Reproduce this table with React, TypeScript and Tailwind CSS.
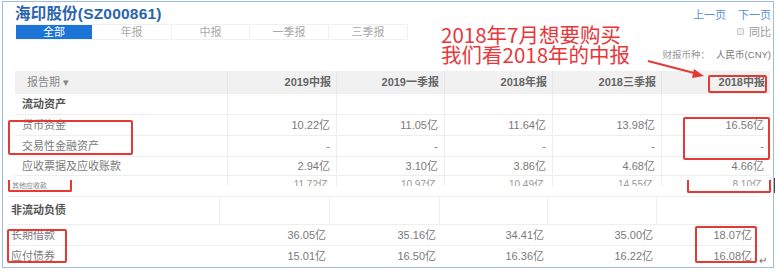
import React from "react";

const FONT = { fontFamily: '"Liberation Sans", "Noto Sans CJK SC", Arial, sans-serif' };

const topRows: { label: string; vals: string[]; section?: boolean }[] = [
  { label: "流动资产", vals: ["", "", "", "", ""], section: true },
  { label: "货币资金", vals: ["10.22亿", "11.05亿", "11.64亿", "13.98亿", "16.56亿"] },
  { label: "交易性金融资产", vals: ["-", "-", "-", "-", "-"] },
  { label: "应收票据及应收账款", vals: ["2.94亿", "3.10亿", "3.86亿", "4.68亿", "4.66亿"] },
];

const headers = ["2019中报", "2019一季报", "2018年报", "2018三季报", "2018中报"];

const topGrid = "grid grid-cols-[213px_109px_108px_108px_109px_108px]";
const botGrid = "grid grid-cols-[212px_110px_110px_108px_109px_101px]";

export default function App() {
  return (
    <div className="relative w-[779px] h-[278px] overflow-hidden bg-white pt-[1px] pl-[2px]" style={FONT}>
      <div className="w-[772px] h-[267px] border border-[#9dbbe3] flex flex-col">
        {/* top screenshot */}
        <div className="h-[185px] overflow-hidden flex flex-col">
          <div className="h-[22px] flex items-end justify-between pl-[12px] pr-[2px]">
            <div className="text-[15.5px] font-bold text-[#2a64b0] leading-[18px] tracking-[0.2px]">海印股份(SZ000861)</div>
            <div className="flex gap-[12px] text-[11px] text-[#5a8fd6] leading-[14px] self-start mt-[6px]">
              <span>上一页</span>
              <span>下一页</span>
            </div>
          </div>
          <div className="h-[16px] flex items-center justify-between pl-[13px] pr-[2px] mt-[1px]">
            <div className="flex h-[16px] border-y border-[#f0f0f0]">
              <div className="w-[76px] bg-[#1b74d6] text-white text-[11px] flex items-center justify-center">全部</div>
              <div className="w-[80px] text-[#aaa] text-[11px] flex items-center justify-center border-r border-[#f0f0f0]">年报</div>
              <div className="w-[78px] text-[#aaa] text-[11px] flex items-center justify-center border-r border-[#f0f0f0]">中报</div>
              <div className="w-[79px] text-[#aaa] text-[11px] flex items-center justify-center border-r border-[#f0f0f0]">一季报</div>
              <div className="w-[79px] text-[#aaa] text-[11px] flex items-center justify-center border-r border-[#f0f0f0]">三季报</div>
            </div>
            <div className="flex items-center gap-[5px] text-[11px] text-[#999]">
              <span className="w-[7px] h-[7px] border border-[#ccc] bg-[#eee] rounded-[1px]" />
              <span>同比</span>
            </div>
          </div>
          <div className="h-[32px] flex items-center justify-end pr-[2px] text-[9.5px] text-[#777] gap-[6px]">
            <span className="text-[#999]">财报币种：</span>
            <span>人民币(CNY)</span>
          </div>
          {/* table */}
          <div className="ml-[12px] w-[755px] mt-[1px]">
            <div className={`${topGrid} h-[23px] bg-[#f1f1f1] text-[11px] font-bold text-[#666]`}>
              <div className="flex items-center pl-[12px] border-r border-[#e6e6e6] font-normal text-[#888]">报告期 ▾</div>
              {headers.map((h, i) => (
                <div key={i} className={`flex items-center justify-end pr-[5px] ${i < 4 ? "border-r border-[#e6e6e6]" : ""}`}>{h}</div>
              ))}
            </div>
            {topRows.map((r, ri) => (
              <div key={ri} className={`${topGrid} ${ri === 3 ? "h-[19px]" : "h-[21px]"} border-b border-[#eeeeee] text-[11px] text-[#7a7a7a]`}>
                <div className={`flex items-center pl-[7px] border-r border-[#eeeeee] ${r.section ? "font-bold text-[#555]" : ""}`}>{r.label}</div>
                {r.vals.map((v, i) => (
                  <div key={i} className={`flex items-center justify-end pr-[6px] ${i < 4 ? "border-r border-[#eeeeee]" : ""}`}>{v}</div>
                ))}
              </div>
            ))}
            <div className={`${topGrid} h-[10px] overflow-hidden text-[10px] text-[#999] leading-[12px]`}>
              <div className="pl-[7px] pt-[3px] border-r border-[#eeeeee]"></div>
              {["11.72亿", "10.97亿", "10.49亿", "14.55亿", "8.10亿"].map((v, i) => (
                <div key={i} className={`text-right pr-[8px] pt-[3px] ${i < 4 ? "border-r border-[#eeeeee]" : ""}`}>{v}</div>
              ))}
            </div>
          </div>
        </div>
        <div className="h-[10px]" />
        {/* bottom screenshot */}
        <div className="ml-[5px] w-[750px] border-t border-[#eeeeee] text-[11px] text-[#7a7a7a]">
          <div className={`${botGrid} h-[28px] border-b border-[#eeeeee]`}>
            <div className="flex items-center pl-[3px] border-r border-[#eeeeee] font-bold text-[#555]">非流动负债</div>
            {[0, 1, 2, 3, 4].map((i) => (
              <div key={i} className={i < 4 ? "border-r border-[#eeeeee]" : ""} />
            ))}
          </div>
          {[
            { label: "长期借款", vals: ["36.05亿", "35.16亿", "34.41亿", "35.00亿", "18.07亿"] },
            { label: "应付债券", vals: ["15.01亿", "16.50亿", "16.36亿", "16.22亿", "16.08亿"] },
          ].map((r, ri) => (
            <div key={ri} className={`${botGrid} h-[21px] ${ri === 0 ? "border-b border-[#eeeeee]" : ""}`}>
              <div className="flex items-center pl-[3px]">{r.label}</div>
              {r.vals.map((v, i) => (
                <div key={i} className={`flex items-center justify-end ${i === 4 ? "pr-[6px]" : "pr-[4px]"}`}>{v}</div>
              ))}
            </div>
          ))}
        </div>
      </div>

      {/* annotation overlays */}
      <div className="absolute left-[441px] top-[24px] text-[#e8363a] text-[20.5px] leading-[20px]" style={{ fontFamily: '"Noto Sans CJK SC", "Liberation Sans", sans-serif' }}>
        <div>2018年7月想要购买</div>
        <div>我们看2018年的中报</div>
      </div>
      <svg className="absolute left-[640px] top-[55px]" width="70" height="28" viewBox="0 0 70 28">
        <line x1="8" y1="6" x2="58" y2="19" stroke="#e53935" strokeWidth="2" />
        <polygon points="64,21 54,14 52,23" fill="#e53935" />
      </svg>
      <div className="absolute left-[708px] top-[75px] w-[59px] h-[18px] border-2 border-[#e53935] rounded-[2px]" />
      <div className="absolute left-[8px] top-[120px] w-[125px] h-[35px] border-2 border-[#e53935] rounded-[2px]" />
      <div className="absolute left-[683px] top-[117px] w-[87px] h-[43px] border-2 border-[#e53935] rounded-[2px]" />
      <div className="absolute left-[8px] top-[180px] w-[64px] h-[12px] border-x-2 border-b-2 border-[#e53935] rounded-b-[2px]" />
      <div className="absolute left-[12px] top-[182px] text-[7px] leading-[8px] text-[#888]">其他应收款</div>
      <div className="absolute left-[687px] top-[180px] w-[84px] h-[13px] border-x-2 border-b-2 border-[#e53935] rounded-b-[2px]" />
      <div className="absolute left-[774px] top-[178px] w-[1px] h-[15px] bg-[#444]" />
      <div className="absolute left-[7px] top-[229px] w-[60px] h-[34px] border-2 border-[#e53935] rounded-[2px]" />
      <div className="absolute left-[695px] top-[226px] w-[62px] h-[37px] border-2 border-[#e53935] rounded-[2px]" />
      <div className="absolute left-[759px] top-[255px] text-[10px] leading-[12px] text-[#666]">↵</div>
    </div>
  );
}
